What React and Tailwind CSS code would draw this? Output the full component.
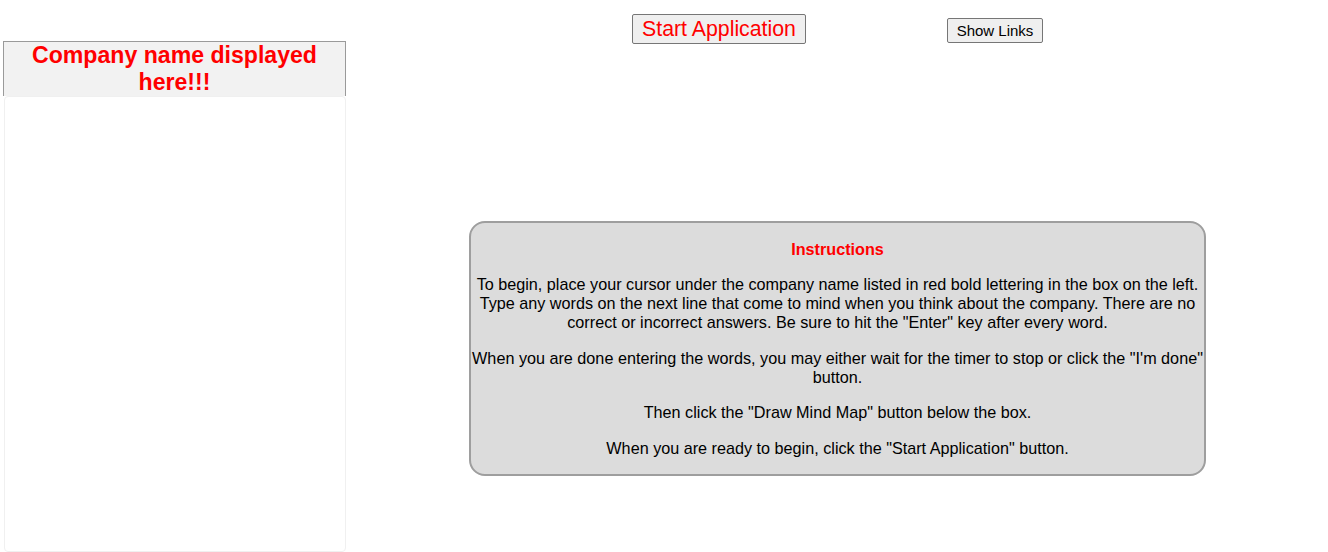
import React from "react";

const paragraphs = [
  "To begin, place your cursor under the company name listed in red bold lettering in the box on the left. Type any words on the next line that come to mind when you think about the company. There are no correct or incorrect answers. Be sure to hit the \"Enter\" key after every word.",
  "When you are done entering the words, you may either wait for the timer to stop or click the \"I'm done\" button.",
  "Then click the \"Draw Mind Map\" button below the box.",
  "When you are ready to begin, click the \"Start Application\" button.",
];

export default function App() {
  return (
    <div className="w-[1328px] h-[552px] overflow-hidden bg-white flex font-['Liberation_Sans',Arial,sans-serif] text-black">
      {/* left column: company name + word entry */}
      <div className="w-[343px] ml-[3px] pt-[41px] flex flex-col shrink-0">
        <div className="h-[55px] bg-[#f2f2f2] border border-b-0 border-[#9a9a9a] text-center text-[23.1px] leading-[27px] font-bold text-[#ff0000]">
          Company name displayed here!!!
        </div>
        <div className="flex-1 ml-[1px] border border-[#f0f0f0] rounded-[4px]"></div>
      </div>

      {/* right area */}
      <div className="flex-1 flex flex-col">
        <div className="flex items-start pt-[14px]">
          <button className="ml-[286px] h-[30px] w-[174px] bg-[#efefef] border border-[#767676] rounded-[2px] text-[21.3px] leading-[24px] text-[#ff0000]">
            Start Application
          </button>
          <button className="ml-[141px] mt-[4px] h-[25px] w-[96px] bg-[#efefef] border border-[#767676] rounded-[2px] text-[15px] leading-[18px] text-black">
            Show Links
          </button>
        </div>

        <div className="ml-[123px] mt-[177px] w-[737px] border-2 border-[#9e9e9e] rounded-[16px] bg-[#dcdcdc] pt-[17px] pb-[16px] text-center text-[16.2px] leading-[19px]">
          <p className="font-bold text-[#ff0000] mb-[16px]">Instructions</p>
          {paragraphs.map((t, i) => (
            <p key={i} className={"-mx-[2px] " + (i < paragraphs.length - 1 ? "mb-[16.5px]" : "")}>
              {t}
            </p>
          ))}
        </div>
      </div>
    </div>
  );
}
